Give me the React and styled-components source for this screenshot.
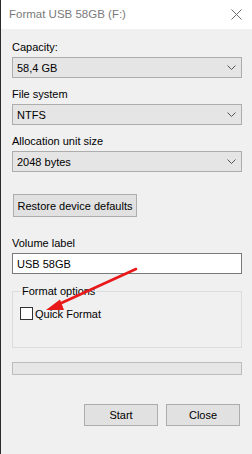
import React from 'react';
import styled, { createGlobalStyle } from 'styled-components';

const Global = createGlobalStyle`
  html, body {
    margin: 0;
    padding: 0;
    background: #f0f0f0;
  }
  body {
    font-family: "Liberation Sans", Arial, sans-serif;
    font-size: 11px;
    color: #000;
  }
`;

const Window = styled.div`
  position: relative;
  width: 252px;
  height: 454px;
  box-sizing: border-box;
  border-left: 1px solid #2b2b2b;
  background: #f0f0f0;
  display: flex;
  flex-direction: column;
  overflow: hidden;
`;

const TitleBar = styled.div`
  height: 29px;
  box-sizing: border-box;
  background: #fff;
  display: flex;
  align-items: center;
  justify-content: space-between;
  padding: 0 10px 1px 8px;
  color: #7a7a7a;
  font-size: 11.5px;
`;

const Body = styled.div`
  display: flex;
  flex-direction: column;
  padding: 10px 10px 0 11px;
`;

const Field = styled.div`
  display: flex;
  flex-direction: column;
  align-items: ${p => (p.$start ? 'flex-start' : 'stretch')};
  margin-bottom: ${p => p.$gap ?? 8}px;
`;

const Label = styled.div`
  height: 16px;
  line-height: 16px;
  margin-bottom: 2px;
`;

const Select = styled.div`
  height: 21px;
  box-sizing: border-box;
  border: 1px solid #adadad;
  background: #e5e5e5;
  display: flex;
  align-items: center;
  justify-content: space-between;
  padding: 0 5px 0 4px;
`;

const TextBox = styled.div`
  height: 21px;
  box-sizing: border-box;
  border: 1px solid #7a7a7a;
  background: #fff;
  display: flex;
  align-items: center;
  padding: 0 4px;
`;

const Button = styled.div`
  height: ${p => p.$h || 22}px;
  width: ${p => p.$w}px;
  margin-left: ${p => p.$ml || 0}px;
  box-sizing: border-box;
  border: 1px solid #adadad;
  background: #e1e1e1;
  display: flex;
  align-items: center;
  justify-content: center;
`;

const Group = styled.fieldset`
  margin: 0;
  height: 64px;
  box-sizing: border-box;
  border: 1px solid #dcdcdc;
  padding: 0 0 0 7px;
  min-width: 0;
  legend {
    padding: 0 1px;
    margin-left: 1px;
    line-height: 14px;
  }
`;

const CheckRow = styled.label`
  display: flex;
  align-items: center;
  gap: 2px;
  margin-top: 9px;
`;

const Box = styled.span`
  width: 13px;
  height: 13px;
  box-sizing: border-box;
  border: 1px solid #333;
  background: #fff;
`;

const Progress = styled.div`
  height: 13px;
  box-sizing: border-box;
  border: 1px solid #bcbcbc;
  background: #e6e6e6;
  margin-top: 14px;
`;

const Actions = styled.div`
  display: flex;
  justify-content: flex-end;
  gap: 8px;
  padding-right: 2px;
  margin-top: 29px;
`;

const Overlay = styled.svg`
  position: absolute;
  left: 0;
  top: 0;
  pointer-events: none;
`;

const Chevron = () => (
  <svg width="9" height="5" viewBox="0 0 9 5">
    <polyline points="0.5,0.5 4.5,4.5 8.5,0.5" fill="none" stroke="#555" strokeWidth="1" />
  </svg>
);

const CloseIcon = () => (
  <svg width="11" height="11" viewBox="0 0 11 11">
    <path d="M0.5 0.5 L10.5 10.5 M10.5 0.5 L0.5 10.5" stroke="#6d6d6d" strokeWidth="1" />
  </svg>
);

export default function App() {
  return (
    <>
      <Global />
      <Window>
        <TitleBar>
          <span>Format USB 58GB (F:)</span>
          <CloseIcon />
        </TitleBar>
        <Body>
          <Field>
            <Label>Capacity:</Label>
            <Select><span>58,4 GB</span><Chevron /></Select>
          </Field>
          <Field>
            <Label>File system</Label>
            <Select><span>NTFS</span><Chevron /></Select>
          </Field>
          <Field $gap={22}>
            <Label>Allocation unit size</Label>
            <Select><span>2048 bytes</span><Chevron /></Select>
          </Field>
          <Field $gap={18} $start>
            <Button $w={124} $h={23} $ml={1}>Restore device defaults</Button>
          </Field>
          <Field $gap={10}>
            <Label>Volume label</Label>
            <TextBox>USB 58GB</TextBox>
          </Field>
          <Group>
            <legend>Format options</legend>
            <CheckRow>
              <Box />
              <span>Quick Format</span>
            </CheckRow>
          </Group>
          <Progress />
          <Actions>
            <Button $w={74}>Start</Button>
            <Button $w={74}>Close</Button>
          </Actions>
        </Body>
        <Overlay width="252" height="454" viewBox="0 0 252 454">
          <line x1="135" y1="269" x2="56" y2="305" stroke="#e8191a" strokeWidth="2.6" strokeLinecap="round" />
          <polygon points="45,310 59,299.5 63,310" fill="#e8191a" />
        </Overlay>
      </Window>
    </>
  );
}
